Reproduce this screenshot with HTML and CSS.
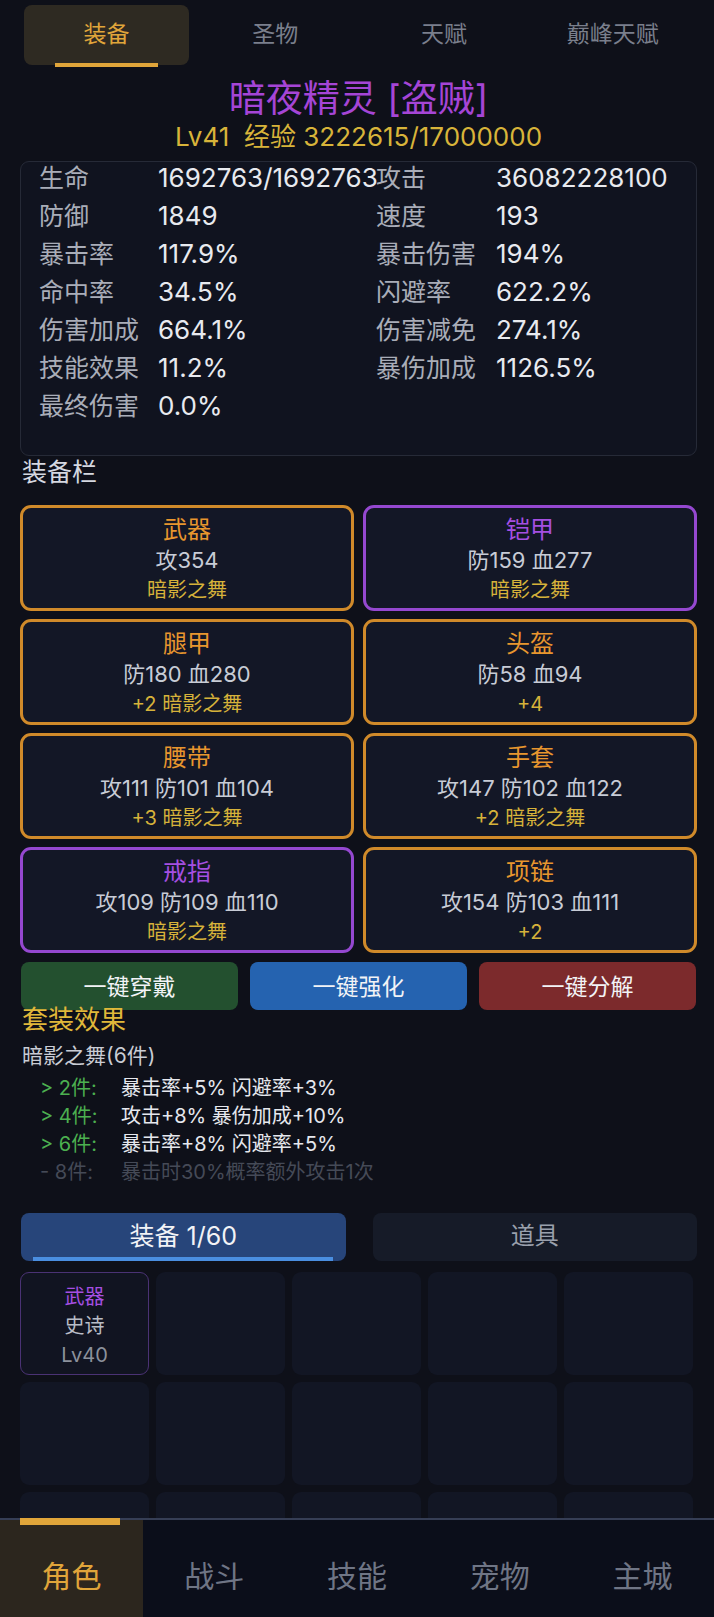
FILE: index.html
```html
<!DOCTYPE html>
<html lang="zh-CN">
<head>
<meta charset="UTF-8">
<meta name="viewport" content="width=device-width, initial-scale=1.0">
<title>角色</title>
<link rel="stylesheet" href="styles.css">
</head>
<body>

<div class="page">
    <div class="top-tabs">
        <div class="top-tab active">装备</div>
        <div class="top-tab">圣物</div>
        <div class="top-tab">天赋</div>
        <div class="top-tab">巅峰天赋</div>
    </div>

    <div class="hero-name">暗夜精灵 [盗贼]</div>
    <div class="hero-level">Lv41&nbsp; 经验 3222615/17000000</div>

    <div class="stats">
        <span class="stat-label">生命</span><span class="stat-value">1692763/1692763</span>
        <span class="stat-label">攻击</span><span class="stat-value">36082228100</span>
        <span class="stat-label">防御</span><span class="stat-value">1849</span>
        <span class="stat-label">速度</span><span class="stat-value">193</span>
        <span class="stat-label">暴击率</span><span class="stat-value">117.9%</span>
        <span class="stat-label">暴击伤害</span><span class="stat-value">194%</span>
        <span class="stat-label">命中率</span><span class="stat-value">34.5%</span>
        <span class="stat-label">闪避率</span><span class="stat-value">622.2%</span>
        <span class="stat-label">伤害加成</span><span class="stat-value">664.1%</span>
        <span class="stat-label">伤害减免</span><span class="stat-value">274.1%</span>
        <span class="stat-label">技能效果</span><span class="stat-value">11.2%</span>
        <span class="stat-label">暴伤加成</span><span class="stat-value">1126.5%</span>
        <span class="stat-label">最终伤害</span><span class="stat-value">0.0%</span>
    </div>

    <div class="section-title">装备栏</div>

    <div class="equip-grid">
        <div class="equip legendary">
            <div class="equip-name">武器</div>
            <div class="equip-stats">攻354</div>
            <div class="equip-set">暗影之舞</div>
        </div>
        <div class="equip epic">
            <div class="equip-name">铠甲</div>
            <div class="equip-stats">防159 血277</div>
            <div class="equip-set">暗影之舞</div>
        </div>
        <div class="equip legendary">
            <div class="equip-name">腿甲</div>
            <div class="equip-stats">防180 血280</div>
            <div class="equip-set">+2 暗影之舞</div>
        </div>
        <div class="equip legendary">
            <div class="equip-name">头盔</div>
            <div class="equip-stats">防58 血94</div>
            <div class="equip-set">+4</div>
        </div>
        <div class="equip legendary">
            <div class="equip-name">腰带</div>
            <div class="equip-stats">攻111 防101 血104</div>
            <div class="equip-set">+3 暗影之舞</div>
        </div>
        <div class="equip legendary">
            <div class="equip-name">手套</div>
            <div class="equip-stats">攻147 防102 血122</div>
            <div class="equip-set">+2 暗影之舞</div>
        </div>
        <div class="equip epic">
            <div class="equip-name">戒指</div>
            <div class="equip-stats">攻109 防109 血110</div>
            <div class="equip-set">暗影之舞</div>
        </div>
        <div class="equip legendary">
            <div class="equip-name">项链</div>
            <div class="equip-stats">攻154 防103 血111</div>
            <div class="equip-set">+2</div>
        </div>
    </div>

    <div class="actions">
        <button class="btn btn-wear">一键穿戴</button>
        <button class="btn btn-upgrade">一键强化</button>
        <button class="btn btn-salvage">一键分解</button>
    </div>

    <div class="set-title">套装效果</div>
    <div class="set-name">暗影之舞(6件)</div>
    <div class="set-bonus on"><span class="bonus-count">&gt; 2件:</span><span>暴击率+5% 闪避率+3%</span></div>
    <div class="set-bonus on"><span class="bonus-count">&gt; 4件:</span><span>攻击+8% 暴伤加成+10%</span></div>
    <div class="set-bonus on"><span class="bonus-count">&gt; 6件:</span><span>暴击率+8% 闪避率+5%</span></div>
    <div class="set-bonus off"><span class="bonus-count">- 8件:</span><span>暴击时30%概率额外攻击1次</span></div>

    <div class="bag-tabs">
        <div class="bag-tab active">装备 1/60</div>
        <div class="bag-tab">道具</div>
    </div>

    <div class="bag-grid">
        <div class="slot epic">
            <div class="slot-name">武器</div>
            <div class="slot-rarity">史诗</div>
            <div class="slot-level">Lv40</div>
        </div>
        <div class="slot"></div>
        <div class="slot"></div>
        <div class="slot"></div>
        <div class="slot"></div>
        <div class="slot"></div>
        <div class="slot"></div>
        <div class="slot"></div>
        <div class="slot"></div>
        <div class="slot"></div>
        <div class="slot"></div>
        <div class="slot"></div>
        <div class="slot"></div>
        <div class="slot"></div>
        <div class="slot"></div>
    </div>
</div>

<nav class="bottom-nav">
    <div class="nav-item active">角色</div>
    <div class="nav-item">战斗</div>
    <div class="nav-item">技能</div>
    <div class="nav-item">宠物</div>
    <div class="nav-item">主城</div>
</nav>

</body>
</html>
```

FILE: styles.css
```css
body {
    margin: 0;
    padding: 0;
    background-color: #0e1019;
    color: #e6e8ee;
    font-family: Inter, "Noto Sans CJK SC", sans-serif;
    overflow: hidden;
}

.page {
    padding: 5px 17px 0 20px;
}

/* top tabs */
.top-tabs {
    display: flex;
    gap: 4px;
    padding: 0 2px 0 4px;
}

.top-tab {
    position: relative;
    flex: 1;
    height: 60px;
    line-height: 58px;
    text-align: center;
    font-size: 23px;
    color: #7a7f8c;
    border-radius: 8px;
}

.top-tab.active {
    background-color: #2e2a22;
    color: #e0a53a;
}

.top-tab.active::after {
    content: "";
    position: absolute;
    left: 31px;
    right: 31px;
    bottom: -2px;
    height: 4px;
    background-color: #e0a53a;
}

.hero-name {
    margin-top: 13px;
    text-align: center;
    font-size: 37px;
    line-height: 42px;
    color: #a545d6;
}

.hero-level {
    text-align: center;
    font-size: 26px;
    line-height: 33px;
    color: #d8b43a;
}

/* stats */
.stats {
    display: grid;
    grid-template-columns: 119px 218px 120px 1fr;
    grid-auto-rows: 38px;
    align-items: start;
    margin-top: 8px;
    padding: 0 0 27px 18px;
    border: 1px solid #262a37;
    border-radius: 9px;
    background-color: #10131f;
    font-size: 25px;
    line-height: 32px;
}

.stat-label {
    color: #a9adb8;
    white-space: nowrap;
}

.stat-value {
    color: #e8eaef;
    font-size: 26px;
    white-space: nowrap;
}

.section-title {
    font-size: 25px;
    line-height: 32px;
    color: #d5d8e0;
    padding-left: 2px;
}

/* equipped items */
.equip-grid {
    display: grid;
    grid-template-columns: 1fr 1fr;
    gap: 8px 9px;
    margin-top: 17px;
}

.equip {
    height: 106px;
    box-sizing: border-box;
    padding-top: 7px;
    border: 3px solid #d08a2a;
    border-radius: 11px;
    background-color: #131726;
    text-align: center;
}

.equip.epic {
    border-color: #9548d0;
}

.equip-name {
    font-size: 24px;
    line-height: 30px;
    color: #e8962e;
}

.equip.epic .equip-name {
    color: #a54fe2;
}

.equip-stats {
    font-size: 22px;
    line-height: 30px;
    color: #c8ccd6;
}

.equip-set {
    font-size: 20px;
    line-height: 30px;
    color: #d6b23a;
}

/* action buttons */
.actions {
    display: flex;
    gap: 12px;
    margin-top: 9px;
    padding: 0 1px;
}

.btn {
    flex: 1;
    height: 48px;
    padding: 0 0 3px;
    border: none;
    border-radius: 8px;
    font-family: inherit;
    font-size: 23px;
    color: #f2f3f6;
}

.btn-wear {
    background-color: #23502f;
}

.btn-upgrade {
    background-color: #2563b0;
}

.btn-salvage {
    background-color: #7c2a2c;
}

/* set bonus */
.set-title {
    position: relative;
    margin-top: -5px;
    padding-left: 2px;
    font-size: 26px;
    line-height: 30px;
    color: #e0b83a;
}

.set-name {
    margin-top: 6px;
    padding-left: 2px;
    font-size: 21px;
    line-height: 30px;
    color: #c9ccd4;
}

.set-bonus {
    display: grid;
    grid-template-columns: 81px 1fr;
    padding-left: 20px;
    font-size: 20px;
    line-height: 28px;
    color: #e6e8ee;
}

.set-name + .set-bonus {
    margin-top: 3px;
}

.set-bonus.on .bonus-count {
    color: #4cb050;
}

.set-bonus.off {
    color: #454a57;
}

/* bag */
.bag-tabs {
    display: flex;
    gap: 27px;
    margin-top: 27px;
    padding-left: 1px;
}

.bag-tab {
    position: relative;
    flex: 1;
    height: 48px;
    line-height: 46px;
    text-align: center;
    font-size: 24px;
    color: #9aa0ac;
    background-color: #161b28;
    border-radius: 8px;
}

.bag-tab.active {
    background-color: #27457a;
    color: #f2f3f6;
    font-size: 25px;
}

.bag-tab.active::after {
    content: "";
    position: absolute;
    left: 12px;
    right: 13px;
    bottom: 0;
    height: 4px;
    background-color: #4a8ee0;
}

.bag-grid {
    display: grid;
    grid-template-columns: repeat(5, 129px);
    gap: 7px;
    margin-top: 11px;
}

.slot {
    height: 103px;
    box-sizing: border-box;
    padding-top: 6px;
    display: flex;
    flex-direction: column;
    justify-content: center;
    align-items: center;
    border-radius: 9px;
    background-color: #121624;
    font-size: 20px;
    line-height: 29px;
}

.slot.epic {
    border: 1px solid #4a3274;
    background-color: #111421;
}

.slot-name {
    color: #a54fe2;
}

.slot-rarity {
    color: #b9bdc7;
}

.slot-level {
    color: #8c919c;
}

/* bottom nav */
.bottom-nav {
    position: fixed;
    left: 0;
    right: 0;
    bottom: 0;
    height: 97px;
    display: flex;
    border-top: 2px solid #363e55;
    background-color: #0b0e1a;
}

.nav-item {
    position: relative;
    flex: 1;
    display: flex;
    align-items: center;
    justify-content: center;
    padding-top: 10px;
    font-size: 30px;
    color: #6f7585;
}

.nav-item.active {
    background-color: #2c261e;
    color: #e0a53a;
}

.nav-item.active::before {
    content: "";
    position: absolute;
    top: -2px;
    left: 20px;
    width: 100px;
    height: 7px;
    background-color: #e0a53a;
}
```
